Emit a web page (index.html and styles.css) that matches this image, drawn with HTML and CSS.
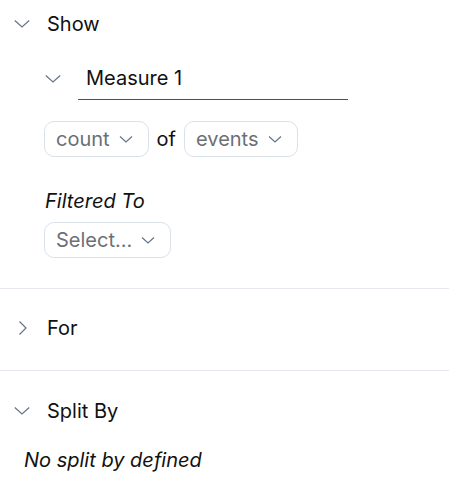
FILE: index.html
```html
<!DOCTYPE html>
<html>
<head>
<meta charset="utf-8">
<link rel="stylesheet" href="styles.css">
</head>
<body>
<div class="panel">
  <section class="section show">
    <div class="head">
      <svg class="chev" width="16" height="16" viewBox="0 0 16 16"><path d="M0.8 4.5 L8 11 L15.2 4.5" fill="none" stroke="#64748b" stroke-width="1.2"/></svg>
      <span class="title">Show</span>
    </div>
    <div class="measure">
      <svg class="chev" width="16" height="16" viewBox="0 0 16 16"><path d="M0.8 4.5 L8 11 L15.2 4.5" fill="none" stroke="#64748b" stroke-width="1.2"/></svg>
      <div class="name">Measure 1</div>
    </div>
    <div class="agg">
      <div class="pill">count<svg width="14" height="14" viewBox="0 0 14 14"><path d="M1 4.5 L7 10 L13 4.5" fill="none" stroke="#64748b" stroke-width="1.2"/></svg></div>
      <span class="of">of</span>
      <div class="pill">events<svg width="14" height="14" viewBox="0 0 14 14"><path d="M1 4.5 L7 10 L13 4.5" fill="none" stroke="#64748b" stroke-width="1.2"/></svg></div>
    </div>
    <div class="filter">
      <div class="label">Filtered To</div>
      <div class="pill">Select...<svg width="14" height="14" viewBox="0 0 14 14"><path d="M1 4.5 L7 10 L13 4.5" fill="none" stroke="#64748b" stroke-width="1.2"/></svg></div>
    </div>
  </section>
  <section class="section for">
    <div class="head">
      <svg class="chev right" width="16" height="16" viewBox="0 0 16 16"><path d="M5.5 1.5 L12 8 L5.5 14.5" fill="none" stroke="#64748b" stroke-width="1.2"/></svg>
      <span class="title">For</span>
    </div>
  </section>
  <section class="section split">
    <div class="head">
      <svg class="chev" width="16" height="16" viewBox="0 0 16 16"><path d="M0.8 4.5 L8 11 L15.2 4.5" fill="none" stroke="#64748b" stroke-width="1.2"/></svg>
      <span class="title">Split By</span>
    </div>
    <div class="empty">No split by defined</div>
  </section>
</div>
</body>
</html>
```
FILE: styles.css
```css
html, body { margin: 0; padding: 0; background: #fff; }
body { font-family: Inter, "Noto Sans", sans-serif; color: #111; }
.panel { width: 449px; }
.section { border-bottom: 1px solid #e5e9ee; }
.section:last-child { border-bottom: none; }
.head { display: flex; align-items: center; height: 24px; padding-left: 14px; }
.head .chev { margin-right: 17px; }
.title { font-size: 20px; line-height: 24px; }
.show { padding: 12px 0 30px; }
.measure { display: flex; align-items: flex-start; margin: 30px 0 0 45px; }
.measure .chev { margin: 5px 17px 0 0; }
.name { width: 262px; border-bottom: 1px solid #4b5060; font-size: 20px; line-height: 24px; padding: 0 0 9px 8px; }
.agg { display: flex; align-items: center; gap: 8px; margin: 21px 0 0 44px; }
.pill { display: inline-flex; align-items: center; gap: 9px; height: 34px; padding: 0 15px 0 11px; border: 1px solid #dbe1e8; border-radius: 10px; font-size: 20px; color: #6b6f76; }
.of { font-size: 20px; }
.filter { margin: 32px 0 0 44px; }
.label { font-style: italic; font-size: 20px; line-height: 24px; margin-left: 1px; margin-bottom: 9px; }
.for { padding: 27px 0 30px; }
.split { padding: 28px 0; }
.empty { font-style: italic; font-size: 20px; line-height: 24px; margin: 25px 0 0 24px; }
```
